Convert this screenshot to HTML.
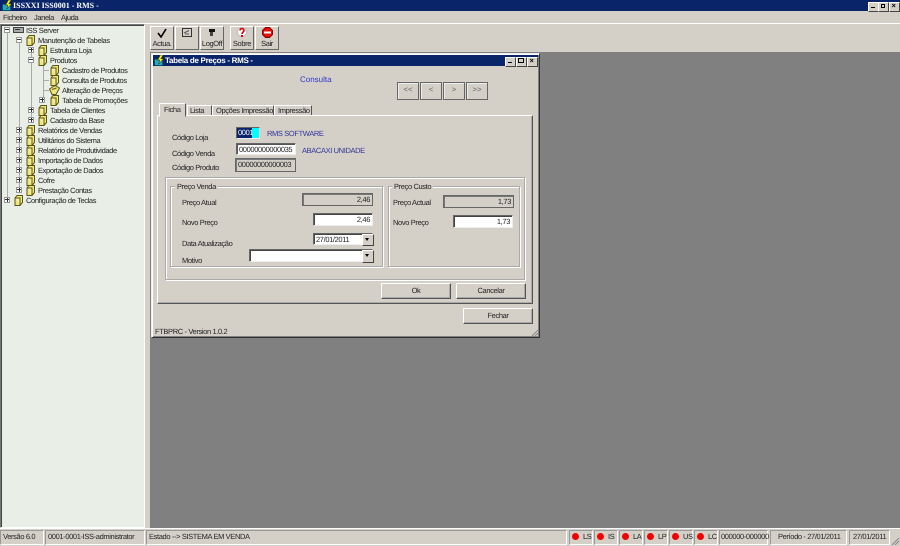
<!DOCTYPE html>
<html><head><meta charset="utf-8"><style>
html,body{margin:0;padding:0;background:#d4d0c8}
body{width:900px;height:546px;overflow:hidden;position:relative}
#w{position:absolute;left:0;top:0;width:900px;height:546px;overflow:hidden;background:#d4d0c8;font-family:"Liberation Sans",sans-serif;font-size:7.5px;letter-spacing:-.37px;color:#222;text-rendering:geometricPrecision;filter:blur(.3px)}
.a,.t,.f,.x,.b,.i,.g,.s,.d{position:absolute;box-sizing:border-box}
.t{white-space:nowrap;line-height:10px;height:10px;margin-top:1px}
.x{width:6px;height:6px;border:1px solid #999;background:#fff}
.b{background:#d4d0c8;border:1px solid;border-color:#fff #555 #555 #fff;box-shadow:inset -1px -1px 0 #aaa;text-align:center;line-height:14px;white-space:nowrap}
.tb{background:#d4d0c8;border:1px solid;border-color:#fff #666 #666 #fff;text-align:center;white-space:nowrap;line-height:10px}
.i{background:#fff;border:1px solid;border-color:#666 #eee #eee #666;box-shadow:inset 1px 1px 0 #444;line-height:12px;padding:0 2px;white-space:nowrap}
.ro{background:#d4d0c8;border:1px solid #666;box-shadow:inset 1px 1px 0 #777;line-height:11px;padding:0 2px;white-space:nowrap}
.g{border:1px solid #aaa;box-shadow:1px 1px 0 #fff,inset 1px 1px 0 #fff}
.s{border:1px solid;border-color:#999 #fff #fff #999;white-space:nowrap;padding-left:2px;top:530px;height:15px;line-height:12px}
.wb{position:absolute;background:#d4d0c8;border:1px solid;border-color:#fff #444 #444 #fff;width:9px;height:8px}
.lg{position:absolute;background:#d4d0c8;padding:0 2px;line-height:9px;white-space:nowrap}
.dd{position:absolute;width:10px;background:#d4d0c8;border:1px solid;border-color:#fff #444 #444 #fff}
.dd:after{content:"";position:absolute;left:2px;top:3px;border:2.5px solid transparent;border-top:3px solid #000;border-bottom:0}
.r{position:absolute;top:533px;width:7px;height:7px;border-radius:50%;background:#f00000}
.n{position:absolute;top:82px;width:20px;height:16px;border:1px solid #666;background:#d4d0c8;box-shadow:inset 1px 1px 0 #eee;text-align:center;line-height:14px;color:#666;font-size:8px;letter-spacing:0}
.l{position:absolute;background:#aaa}
</style></head><body><div id="w">
<svg width="0" height="0" style="position:absolute"><defs>
<symbol id="fo" viewBox="0 0 9 11"><path d="M3 .5H8.500V7.500L6 10.500H1V3Z" fill="#ece67c" stroke="#5a5415"/><path d="M1 3H6V10" fill="#f6f0a0" stroke="#5a5415"/></symbol>
<symbol id="fopen" viewBox="0 0 11 10"><path d="M.5 4 6 .5 10.500 3 7 9.500H3Z" fill="#ece67c" stroke="#5a5415"/><path d="M3 4.500 7.500 3" stroke="#5a5415" fill="none"/></symbol>
<symbol id="app" viewBox="0 0 12 12"><rect x=".5" y="4.500" width="9" height="7" fill="#2ab" stroke="#046"/><path d="M7 0 4 5.500H6.500L5 10 10.500 4H7.500L10 0Z" fill="#ff0" stroke="#333" stroke-width=".6"/></symbol>
</defs></svg>

<!-- main title bar -->
<div class="a" style="left:0;top:0;width:900px;height:11px;background:#0a246a"></div>
<svg class="a" style="left:2px;top:0" width="11" height="11"><use href="#app"/></svg>
<div class="t" style="left:13px;top:0;color:#fff;font-family:'Liberation Serif',serif;font-weight:bold;font-size:8px;letter-spacing:0">ISSXXI ISS0001 - RMS -</div>
<div class="wb" style="left:868px;top:2px"><div class="a" style="left:2px;top:4px;width:4px;height:1px;background:#000"></div></div>
<div class="wb" style="left:878px;top:2px"><div class="a" style="left:2px;top:1px;width:4px;height:4px;border:1px solid #000"></div></div>
<div class="wb" style="left:889px;top:2px"><div class="t" style="left:0;top:-3px;width:7px;text-align:center;color:#000;font-weight:bold">×</div></div>

<!-- menu -->
<div class="t" style="left:3px;top:12px">Ficheiro</div>
<div class="t" style="left:34px;top:12px">Janela</div>
<div class="t" style="left:61px;top:12px">Ajuda</div>
<div class="l" style="left:0;top:23px;width:900px;height:1px;background:#fff"></div>

<!-- left tree panel -->
<div class="a" style="left:0;top:24px;width:145px;height:504px;background:#e9eee6;border:1px solid;border-color:#777 #fff #fff #777;box-shadow:inset 1px 1px 0 #444"></div>

<!-- tree lines -->
<div class="l" style="left:7px;top:33px;width:1px;height:167px"></div>
<div class="l" style="left:19px;top:43px;width:1px;height:147px"></div>
<div class="l" style="left:31px;top:53px;width:1px;height:67px"></div>
<div class="l" style="left:43px;top:63px;width:1px;height:37px"></div>
<div class="l" style="left:43px;top:70px;width:6px;height:1px"></div>
<div class="l" style="left:43px;top:80px;width:6px;height:1px"></div>
<div class="l" style="left:43px;top:90px;width:6px;height:1px"></div>

<div class="x" style="left:4px;top:27px"><div class="a" style="left:0;top:1px;width:4px;height:1px;background:#333"></div></div>
<svg class="a" style="left:13px;top:26px" width="11" height="8"><rect x=".5" y="1.500" width="10" height="5" fill="#aaa" stroke="#444"/><rect x="2" y="3" width="5" height="1" fill="#333"/></svg>
<div class="t" style="left:26px;top:25px">ISS Server</div>

<div class="x" style="left:16px;top:37px"><div class="a" style="left:0;top:1px;width:4px;height:1px;background:#333"></div></div>
<svg class="a" style="left:26px;top:35px" width="9" height="11"><use href="#fo"/></svg>
<div class="t" style="left:38px;top:35px">Manutenção de Tabelas</div>

<div class="x" style="left:28px;top:47px"><div class="a" style="left:0;top:1px;width:4px;height:1px;background:#333"></div><div class="a" style="left:1.500px;top:0;width:1px;height:4px;background:#333"></div></div>
<svg class="a" style="left:38px;top:45px" width="9" height="11"><use href="#fo"/></svg>
<div class="t" style="left:50px;top:45px">Estrutura Loja</div>

<div class="x" style="left:28px;top:57px"><div class="a" style="left:0;top:1px;width:4px;height:1px;background:#333"></div></div>
<svg class="a" style="left:38px;top:55px" width="9" height="11"><use href="#fo"/></svg>
<div class="t" style="left:50px;top:55px">Produtos</div>

<svg class="a" style="left:50px;top:65px" width="9" height="11"><use href="#fo"/></svg>
<div class="t" style="left:62px;top:65px">Cadastro de Produtos</div>
<svg class="a" style="left:50px;top:75px" width="9" height="11"><use href="#fo"/></svg>
<div class="t" style="left:62px;top:75px">Consulta de Produtos</div>
<svg class="a" style="left:49px;top:85px" width="11" height="10"><use href="#fopen"/></svg>
<div class="t" style="left:62px;top:85px">Alteração de Preços</div>

<div class="x" style="left:39px;top:97px"><div class="a" style="left:0;top:1px;width:4px;height:1px;background:#333"></div><div class="a" style="left:1.500px;top:0;width:1px;height:4px;background:#333"></div></div>
<svg class="a" style="left:50px;top:95px" width="9" height="11"><use href="#fo"/></svg>
<div class="t" style="left:62px;top:95px">Tabela de Promoções</div>

<div class="x" style="left:28px;top:107px"><div class="a" style="left:0;top:1px;width:4px;height:1px;background:#333"></div><div class="a" style="left:1.500px;top:0;width:1px;height:4px;background:#333"></div></div>
<svg class="a" style="left:38px;top:105px" width="9" height="11"><use href="#fo"/></svg>
<div class="t" style="left:50px;top:105px">Tabela de Clientes</div>

<div class="x" style="left:28px;top:117px"><div class="a" style="left:0;top:1px;width:4px;height:1px;background:#333"></div><div class="a" style="left:1.500px;top:0;width:1px;height:4px;background:#333"></div></div>
<svg class="a" style="left:38px;top:115px" width="9" height="11"><use href="#fo"/></svg>
<div class="t" style="left:50px;top:115px">Cadastro da Base</div>

<div class="x" style="left:16px;top:127px"><div class="a" style="left:0;top:1px;width:4px;height:1px;background:#333"></div><div class="a" style="left:1.500px;top:0;width:1px;height:4px;background:#333"></div></div>
<svg class="a" style="left:26px;top:125px" width="9" height="11"><use href="#fo"/></svg>
<div class="t" style="left:38px;top:125px">Relatórios de Vendas</div>

<div class="x" style="left:16px;top:137px"><div class="a" style="left:0;top:1px;width:4px;height:1px;background:#333"></div><div class="a" style="left:1.500px;top:0;width:1px;height:4px;background:#333"></div></div>
<svg class="a" style="left:26px;top:135px" width="9" height="11"><use href="#fo"/></svg>
<div class="t" style="left:38px;top:135px">Utilitários do Sistema</div>

<div class="x" style="left:16px;top:147px"><div class="a" style="left:0;top:1px;width:4px;height:1px;background:#333"></div><div class="a" style="left:1.500px;top:0;width:1px;height:4px;background:#333"></div></div>
<svg class="a" style="left:26px;top:145px" width="9" height="11"><use href="#fo"/></svg>
<div class="t" style="left:38px;top:145px">Relatório de Produtividade</div>

<div class="x" style="left:16px;top:157px"><div class="a" style="left:0;top:1px;width:4px;height:1px;background:#333"></div><div class="a" style="left:1.500px;top:0;width:1px;height:4px;background:#333"></div></div>
<svg class="a" style="left:26px;top:155px" width="9" height="11"><use href="#fo"/></svg>
<div class="t" style="left:38px;top:155px">Importação de Dados</div>

<div class="x" style="left:16px;top:167px"><div class="a" style="left:0;top:1px;width:4px;height:1px;background:#333"></div><div class="a" style="left:1.500px;top:0;width:1px;height:4px;background:#333"></div></div>
<svg class="a" style="left:26px;top:165px" width="9" height="11"><use href="#fo"/></svg>
<div class="t" style="left:38px;top:165px">Exportação de Dados</div>

<div class="x" style="left:16px;top:177px"><div class="a" style="left:0;top:1px;width:4px;height:1px;background:#333"></div><div class="a" style="left:1.500px;top:0;width:1px;height:4px;background:#333"></div></div>
<svg class="a" style="left:26px;top:175px" width="9" height="11"><use href="#fo"/></svg>
<div class="t" style="left:38px;top:175px">Cofre</div>

<div class="x" style="left:16px;top:187px"><div class="a" style="left:0;top:1px;width:4px;height:1px;background:#333"></div><div class="a" style="left:1.500px;top:0;width:1px;height:4px;background:#333"></div></div>
<svg class="a" style="left:26px;top:185px" width="9" height="11"><use href="#fo"/></svg>
<div class="t" style="left:38px;top:185px">Prestação Contas</div>

<div class="x" style="left:4px;top:197px"><div class="a" style="left:0;top:1px;width:4px;height:1px;background:#333"></div><div class="a" style="left:1.500px;top:0;width:1px;height:4px;background:#333"></div></div>
<svg class="a" style="left:14px;top:195px" width="9" height="11"><use href="#fo"/></svg>
<div class="t" style="left:26px;top:195px">Configuração de Teclas</div>

<!-- toolbar -->
<div class="tb a" style="left:150px;top:26px;width:24px;height:24px;padding-top:12px">Actua.</div>
<svg class="a" style="left:157px;top:28px" width="10" height="10"><path d="M1 5 4 9 9 1" fill="none" stroke="#000" stroke-width="1.600"/></svg>
<div class="tb a" style="left:175px;top:26px;width:24px;height:24px"></div>
<svg class="a" style="left:182px;top:28px" width="10" height="9"><rect x=".5" y=".5" width="9" height="8" fill="#d4d0c8" stroke="#333"/><path d="M2 5 7 2.500M3 6H7" stroke="#555"/></svg>
<div class="tb a" style="left:200px;top:26px;width:24px;height:24px;padding-top:12px">LogOff</div>
<svg class="a" style="left:209px;top:29px" width="6" height="8"><rect width="6" height="3" fill="#111"/><rect x="1" y="3" width="3" height="4" fill="#444"/></svg>
<div class="tb a" style="left:230px;top:26px;width:24px;height:24px;padding-top:12px">Sobre</div>
<svg class="a" style="left:237px;top:27px" width="10" height="11"><circle cx="5" cy="5" r="4.500" fill="#fff" stroke="#bbb"/><path d="M3 3.500C3 1 7 1 7 3.500 7 5 5 5 5 7" fill="none" stroke="#d00" stroke-width="1.600"/><rect x="4" y="8" width="2" height="2" fill="#d00"/></svg>
<div class="tb a" style="left:255px;top:26px;width:24px;height:24px;padding-top:12px">Sair</div>
<svg class="a" style="left:262px;top:27px" width="11" height="11"><path d="M3.500 .5H7.500L10.500 3.500V7.500L7.500 10.500H3.500L.5 7.500V3.500Z" fill="#e01010" stroke="#800"/><rect x="2" y="4.500" width="7" height="2" fill="#fff"/></svg>

<!-- MDI area -->
<div class="a" style="left:150px;top:52px;width:750px;height:476px;background:#808080"></div>

<!-- dialog -->
<div class="a" style="left:151px;top:53px;width:389px;height:285px;background:#d4d0c8;border:1px solid;border-color:#eee #333 #333 #eee;box-shadow:inset 1px 1px 0 #fff,inset -1px -1px 0 #808080"></div>
<div class="a" style="left:153px;top:55px;width:385px;height:11px;background:#0a246a"></div>
<svg class="a" style="left:154px;top:55px" width="11" height="11"><use href="#app"/></svg>
<div class="t" style="left:165px;top:55px;color:#fff;font-weight:bold;font-size:8px;letter-spacing:-.3px">Tabela de Preços - RMS -</div>
<div class="wb" style="left:505px;top:57px"><div class="a" style="left:2px;top:4px;width:4px;height:1px;background:#000"></div></div>
<div class="wb" style="left:516px;top:57px"><div class="a" style="left:1px;top:0;width:6px;height:5px;border:1px solid #000"></div></div>
<div class="wb" style="left:527px;top:57px"><div class="t" style="left:0;top:-3px;width:7px;text-align:center;color:#000;font-weight:bold">×</div></div>

<div class="t" style="left:300px;top:74px;color:#3333cc;font-size:8px;letter-spacing:0">Consulta</div>
<div class="n" style="left:397px">&lt;&lt;</div>
<div class="n" style="left:420px">&lt;</div>
<div class="n" style="left:443px">&gt;</div>
<div class="n" style="left:466px">&gt;&gt;</div>

<!-- tab panel -->
<div class="a" style="left:157px;top:115px;width:376px;height:189px;border:1px solid;border-color:#fff #555 #555 #fff;box-shadow:inset -1px -1px 0 #aaa"></div>
<div class="a" style="left:159px;top:103px;width:27px;height:14px;background:#d4d0c8;border:1px solid;border-color:#fff #555 #d4d0c8 #fff;padding:1px 0 0 4px;line-height:10px">Ficha</div>
<div class="a" style="left:187px;top:105px;width:25px;height:10px;border-right:1px solid #555;border-top:1px solid #fff;border-left:1px solid #fff;padding-left:2px;line-height:9px;white-space:nowrap">Lista</div>
<div class="a" style="left:212px;top:105px;width:62px;height:10px;border-right:1px solid #555;border-top:1px solid #fff;border-left:1px solid #fff;padding-left:3px;line-height:9px;white-space:nowrap">Opções Impressão</div>
<div class="a" style="left:274px;top:105px;width:38px;height:10px;border-right:1px solid #555;border-top:1px solid #fff;border-left:1px solid #fff;padding-left:3px;line-height:9px;white-space:nowrap">Impressão</div>

<div class="t" style="left:172px;top:132px">Código Loja</div>
<div class="a" style="left:236px;top:127px;width:24px;height:12px;background:#00ffff;border:1px solid;border-color:#666 #eee #eee #666"></div>
<div class="a" style="left:237px;top:128px;width:15px;height:10px;background:#0a246a;color:#fff;line-height:10px;white-space:nowrap;padding-left:1px">0001</div>
<div class="t" style="left:267px;top:128px;color:#333399">RMS SOFTWARE</div>

<div class="t" style="left:172px;top:148px">Código Venda</div>
<div class="i a" style="left:236px;top:143px;width:60px;height:12px;line-height:11px;box-shadow:inset 1px 1px 0 #555">00000000000035</div>
<div class="t" style="left:302px;top:145px;color:#333399">ABACAXI UNIDADE</div>

<div class="t" style="left:172px;top:162px">Código Produto</div>
<div class="ro a" style="left:235px;top:158px;width:61px;height:14px">00000000000003</div>

<!-- outer group -->
<div class="g" style="left:165px;top:177px;width:360px;height:103px"></div>
<div class="g" style="left:170px;top:186px;width:213px;height:81px"></div>
<div class="lg" style="left:175px;top:182px">Preço Venda</div>
<div class="g" style="left:388px;top:186px;width:132px;height:81px"></div>
<div class="lg" style="left:392px;top:182px">Preço Custo</div>

<div class="t" style="left:182px;top:197px">Preço Atual</div>
<div class="ro a" style="left:302px;top:193px;width:71px;height:13px;text-align:right;line-height:11px">2,46</div>
<div class="t" style="left:182px;top:217px">Novo Preço</div>
<div class="i a" style="left:313px;top:213px;width:60px;height:13px;text-align:right">2,46</div>
<div class="t" style="left:182px;top:238px">Data Atualização</div>
<div class="i a" style="left:313px;top:233px;width:60px;height:12px;line-height:11px">27/01/2011</div>
<div class="dd" style="left:362px;top:234px;height:10px"></div>
<div class="t" style="left:182px;top:255px">Motivo</div>
<div class="i a" style="left:249px;top:249px;width:124px;height:13px"></div>
<div class="dd" style="left:362px;top:250px;height:11px"></div>

<div class="t" style="left:393px;top:197px">Preço Actual</div>
<div class="ro a" style="left:443px;top:195px;width:71px;height:13px;text-align:right;line-height:11px">1,73</div>
<div class="t" style="left:393px;top:217px">Novo Preço</div>
<div class="i a" style="left:453px;top:215px;width:60px;height:13px;text-align:right">1,73</div>

<div class="b" style="left:381px;top:283px;width:70px;height:16px">Ok</div>
<div class="b" style="left:456px;top:283px;width:70px;height:16px">Cancelar</div>
<div class="b" style="left:463px;top:308px;width:70px;height:16px">Fechar</div>

<div class="t" style="left:155px;top:326px">FTBPRC - Version 1.0.2</div>
<svg class="a" style="left:531px;top:329px" width="8" height="8"><path d="M7 1 1 7M7 4 4 7" stroke="#888"/></svg>

<!-- status bar -->
<div class="a" style="left:0;top:528px;width:900px;height:1px;background:#fff"></div>
<div class="s" style="left:0;width:44px">Versão 6.0</div>
<div class="s" style="left:45px;width:100px">0001-0001-ISS-administrator</div>
<div class="s" style="left:146px;width:421px">Estado --&gt; SISTEMA EM VENDA</div>
<div class="s" style="left:569px;width:24px;padding-left:13px">LS</div><div class="r" style="left:572px"></div>
<div class="s" style="left:594px;width:24px;padding-left:13px">IS</div><div class="r" style="left:597px"></div>
<div class="s" style="left:619px;width:24px;padding-left:13px">LA</div><div class="r" style="left:622px"></div>
<div class="s" style="left:644px;width:24px;padding-left:13px">LP</div><div class="r" style="left:647px"></div>
<div class="s" style="left:669px;width:24px;padding-left:13px">US</div><div class="r" style="left:672px"></div>
<div class="s" style="left:694px;width:24px;padding-left:13px">LC</div><div class="r" style="left:697px"></div>
<div class="s" style="left:719px;width:49px;padding-left:1px">000000-000000</div>
<div class="s" style="left:770px;width:77px;padding-left:7px">Período - 27/01/2011</div>
<div class="s" style="left:849px;width:41px;padding-left:3px">27/01/2011</div>
<svg class="a" style="left:891px;top:537px" width="9" height="9"><path d="M8 1 1 8M8 4 4 8" stroke="#888"/></svg>
</div></body></html>
